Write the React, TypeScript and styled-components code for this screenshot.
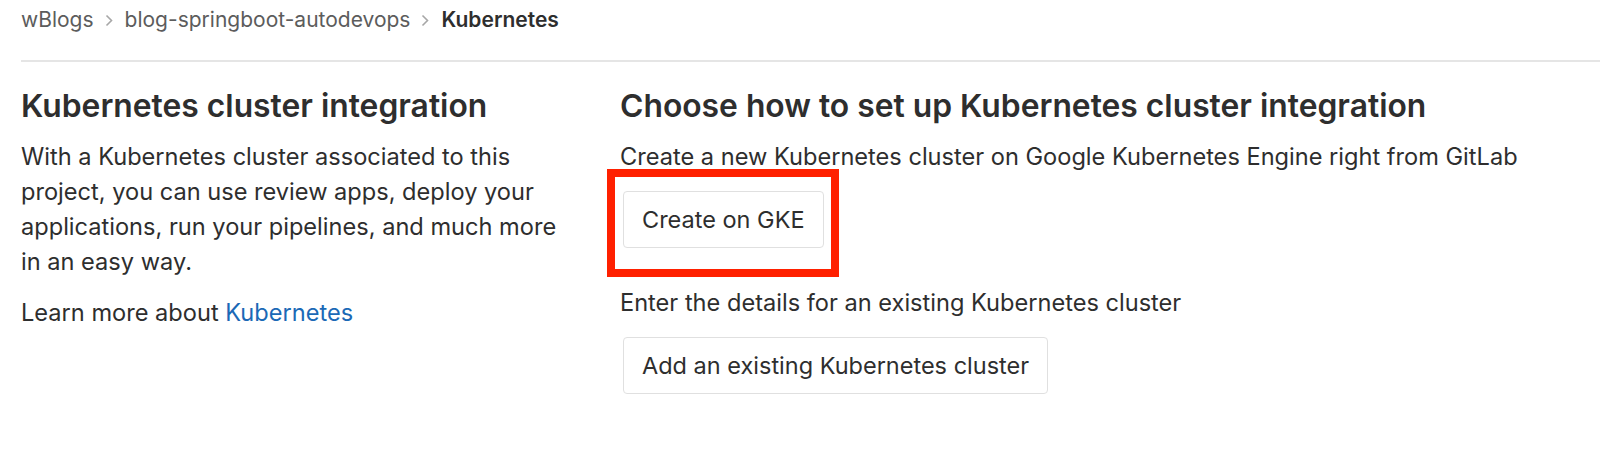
import React from "react";
import styled, { createGlobalStyle } from "styled-components";

const GlobalStyle = createGlobalStyle`
  body {
    margin: 0;
    background: #fff;
    font-family: Inter, "Liberation Sans", sans-serif;
    color: #2e2e2e;
  }
`;

const Page = styled.div`
  padding-left: 21px;
`;

const Breadcrumbs = styled.nav`
  height: 62px;
  box-sizing: border-box;
  padding-top: 8px;
  border-bottom: 2px solid #e5e5e5;
  display: flex;
  align-items: flex-start;
  font-size: 21px;
  line-height: 24px;
`;

const Crumb = styled.span<{ $current?: boolean }>`
  color: ${p => (p.$current ? "#2e2e2e" : "#5c5c5c")};
  font-weight: ${p => (p.$current ? 600 : 400)};
`;

const Chevron = styled.span`
  display: flex;
  align-items: center;
  height: 24px;
  margin: 0 12px 0 11px;
  color: #a7a7a7;
`;

const Content = styled.div`
  display: flex;
  padding-top: 27px;
`;

const LeftColumn = styled.div`
  flex: 0 0 599px;
`;

const RightColumn = styled.div`
  flex: 1;
`;

const Heading = styled.h4`
  margin: 0 0 16px;
  font-size: 31.8px;
  line-height: 34px;
  font-weight: 600;
  color: #2e2e2e;
`;

const Text = styled.p<{ $gap?: number }>`
  margin: 0 0 ${p => p.$gap ?? 16}px;
  font-size: 23.6px;
  line-height: 35px;
  max-width: 545px;
`;

const Hint = styled.p<{ $gap?: number }>`
  margin: 0 0 ${p => p.$gap ?? 17}px;
  font-size: 23.6px;
  line-height: 35px;
`;

const Link = styled.a`
  color: #1b69b6;
  text-decoration: none;
`;

const ButtonWrap = styled.div<{ $gap?: number }>`
  position: relative;
  display: inline-block;
  margin: 0 0 ${p => p.$gap ?? 0}px 3px;
`;

const Button = styled.button`
  display: block;
  padding: 10px 18px;
  font-family: inherit;
  font-size: 23.5px;
  line-height: 35px;
  color: #2e2e2e;
  background: #fff;
  border: 1px solid #e0e0e0;
  border-radius: 4px;
`;

// red annotation frame drawn over the first option
const Highlight = styled.div`
  position: absolute;
  top: -22px;
  left: -16px;
  right: -15px;
  bottom: -29px;
  border: 8px solid #ff2000;
  pointer-events: none;
`;

const ChevronIcon = () => (
  <svg width="8" height="13" viewBox="0 0 8 13" fill="none">
    <path d="M1.5 1.5 L6.5 6.5 L1.5 11.5" stroke="currentColor" strokeWidth="1.6" />
  </svg>
);

export default function App() {
  return (
    <Page>
      <GlobalStyle />
      <Breadcrumbs>
        <Crumb>wBlogs</Crumb>
        <Chevron>
          <ChevronIcon />
        </Chevron>
        <Crumb>blog-springboot-autodevops</Crumb>
        <Chevron>
          <ChevronIcon />
        </Chevron>
        <Crumb $current>Kubernetes</Crumb>
      </Breadcrumbs>
      <Content>
        <LeftColumn>
          <Heading>Kubernetes cluster integration</Heading>
          <Text>
            With a Kubernetes cluster associated to this project, you can use review apps, deploy
            your applications, run your pipelines, and much more in an easy way.
          </Text>
          <Text>
            Learn more about <Link href="#">Kubernetes</Link>
          </Text>
        </LeftColumn>
        <RightColumn>
          <Heading>Choose how to set up Kubernetes cluster integration</Heading>
          <Hint>Create a new Kubernetes cluster on Google Kubernetes Engine right from GitLab</Hint>
          <ButtonWrap $gap={37}>
            <Button>Create on GKE</Button>
            <Highlight />
          </ButtonWrap>
          <Hint>Enter the details for an existing Kubernetes cluster</Hint>
          <ButtonWrap>
            <Button>Add an existing Kubernetes cluster</Button>
          </ButtonWrap>
        </RightColumn>
      </Content>
    </Page>
  );
}
